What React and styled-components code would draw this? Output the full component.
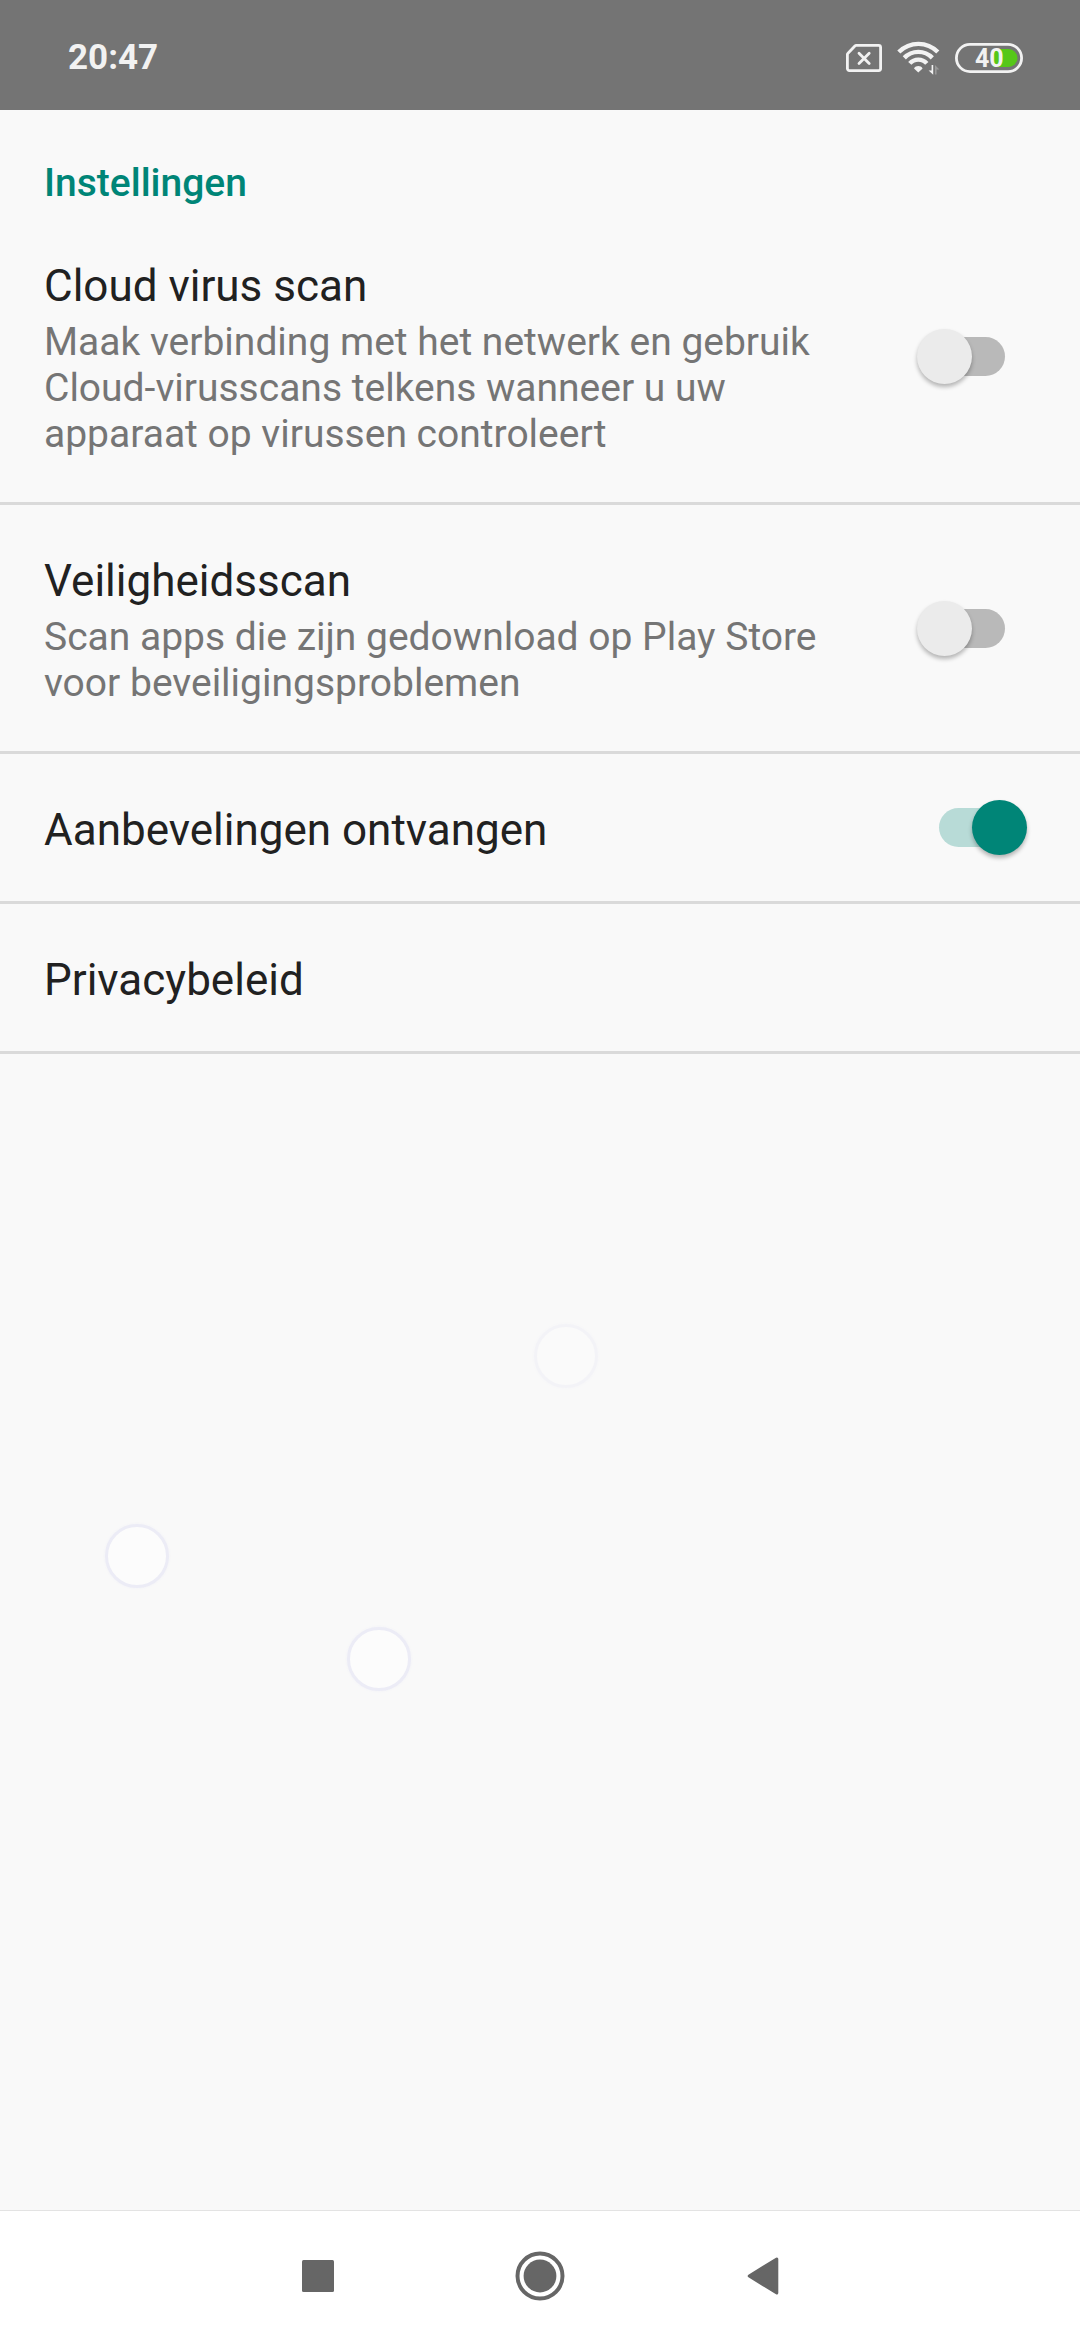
import React from 'react';
import styled, { createGlobalStyle } from 'styled-components';

const GlobalStyle = createGlobalStyle`
  * {
    box-sizing: border-box;
  }
  body {
    margin: 0;
    background-color: #f9f9f9;
    font-family: Roboto, sans-serif;
  }
`

const Container = styled.div`
  min-height: 100vh;
  display: flex;
  flex-direction: column;
`

const StatusBar = styled.header`
  height: 110px;
  padding: 6px 57px 0px 68px;
  display: flex;
  justify-content: space-between;
  align-items: center;
  background-color: #747474;
  color: #f2f2f2;
`

const Time = styled.time`
  font-size: 35px;
  line-height: 40px;
  font-weight: 700;
`

const StatusIcons = styled.div`
  display: flex;
  align-items: center;
  gap: 15px;
`

const Main = styled.main`
  flex: 1;
  display: flex;
  flex-direction: column;
`

const SectionTitle = styled.h1`
  margin: 0px;
  padding: 50px 44px 4px;
  font-size: 39px;
  line-height: 46px;
  font-weight: 500;
  color: #008577;
`

const List = styled.ul`
  margin: 0px;
  padding: 0px;
  list-style: none;
`

const ListItem = styled.li`
  border-bottom: 3px solid #dadada;
`

const Row = styled.label`
  display: flex;
  align-items: center;
  gap: 55px;
  padding: 0px 53px 0px 44px;
`

const LinkRow = styled.a`
  display: flex;
  padding: 0px 53px 0px 44px;
  text-decoration: none;
`

const Info = styled.span`
  flex: 1;
  display: flex;
  flex-direction: column;
  gap: 7px;
  padding: 50px 0px 45px;
`

const Title = styled.span`
  font-size: 44px;
  line-height: 52px;
  color: #212121;
`

const Desc = styled.span`
  font-size: 39px;
  line-height: 46px;
  color: #757575;
`

const Switch = styled.input`
  appearance: none;
  flex: none;
  width: 110px;
  height: 56px;
  margin: 0px;
  display: grid;
  align-items: center;
  cursor: pointer;

  &::before,
  &::after {
    content: '';
    grid-area: 1 / 1;
  }
  &::before {
    justify-self: center;
    width: 66px;
    height: 39px;
    border-radius: 20px;
    background-color: #b9b9b9;
  }
  &::after {
    justify-self: start;
    width: 55px;
    height: 55px;
    border-radius: 50%;
    background-color: #ebebeb;
    box-shadow: 0px 3px 4px rgba(0, 0, 0, 0.28);
  }
  &:checked::before {
    background-color: #b8dbd7;
  }
  &:checked::after {
    justify-self: end;
    background-color: #008577;
  }
`

const Canvas = styled.div`
  flex: 1;
  position: relative;
`

const Bubble = styled.span`
  position: absolute;
  left: ${props => props.$x}px;
  top: ${props => props.$y}px;
  width: 64px;
  height: 64px;
  border-radius: 50%;
  border: 3px solid #ececf6;
  background-color: #fcfcfc;
  box-shadow: 0px 0px 3px #f0f0f7;
  opacity: ${props => props.$opacity};
`

const NavBar = styled.nav`
  height: 130px;
  display: flex;
  justify-content: center;
  border-top: 1px solid #e3e3e3;
  background-color: #fff;
`

const NavButton = styled.button`
  width: 222px;
  padding: 0px;
  border: none;
  background: none;
  display: flex;
  justify-content: center;
  align-items: center;
  color: #666;
  cursor: pointer;
`

const SimIcon = () => (
  <svg width="36" height="28" viewBox="0 0 36 28" fill="none" stroke="currentColor" strokeWidth="2.8">
    <path d="M10.3 1.4H32.6a2 2 0 0 1 2 2V24.6a2 2 0 0 1-2 2H3.4a2 2 0 0 1-2-2V10.6a2 2 0 0 1 .6-1.4L8.9 2a2 2 0 0 1 1.4-.6Z" />
    <path d="M13 9.2 23.2 19.4M23.2 9.2 13 19.4" strokeLinecap="round" />
  </svg>
)

const WifiIcon = () => (
  <svg width="43" height="34" viewBox="0 -1 43 34" fill="none">
    <g stroke="currentColor" strokeWidth="4.4">
      <path d="M1.8 10C13-.9 30-.9 40.8 10" />
      <path d="M7.3 15.9C15 7.9 27.6 7.9 35.3 15.9" />
      <path d="M12.8 21.4C17.4 16.3 25.2 16.3 29.8 21.4" />
    </g>
    <path d="M17 26.4C18.8 23.2 23.8 23.2 25.6 26.4L21.3 30.6Z" fill="currentColor" />
    <path d="M36.2 23V32.8L31.6 28.4H34.6V23Z" fill="currentColor" />
    <path d="M38 32.6V23L42.4 27.6H39.6V32.6Z" fill="#999" />
  </svg>
)

const BatteryIcon = () => (
  <svg width="68" height="30" viewBox="0 0 68 30">
    <rect x="1.4" y="1.4" width="65.2" height="27.2" rx="13.6" fill="none" stroke="currentColor" strokeWidth="2.8" />
    <path d="M38 6H53.5a9 9 0 0 1 0 18H38Z" fill="#56c718" />
    <text x="20" y="24" fontSize="25" fontWeight="700" fill="currentColor">40</text>
  </svg>
)

const settings = [
  {
    title: 'Cloud virus scan',
    desc: 'Maak verbinding met het netwerk en gebruik Cloud-virusscans telkens wanneer u uw apparaat op virussen controleert',
    on: false,
  },
  {
    title: 'Veiligheidsscan',
    desc: 'Scan apps die zijn gedownload op Play Store voor beveiligingsproblemen',
    on: false,
  },
  { title: 'Aanbevelingen ontvangen', on: true },
]

const App = () => {
  return (
    <Container>
      <GlobalStyle />
      <StatusBar>
        <Time>20:47</Time>
        <StatusIcons>
          <SimIcon />
          <WifiIcon />
          <BatteryIcon />
        </StatusIcons>
      </StatusBar>
      <Main>
        <SectionTitle>Instellingen</SectionTitle>
        <List>
          {settings.map(item => (
            <ListItem key={item.title}>
              <Row>
                <Info>
                  <Title>{item.title}</Title>
                  {item.desc && <Desc>{item.desc}</Desc>}
                </Info>
                <Switch type="checkbox" role="switch" defaultChecked={item.on} />
              </Row>
            </ListItem>
          ))}
          <ListItem>
            <LinkRow href="#privacy">
              <Info>
                <Title>Privacybeleid</Title>
              </Info>
            </LinkRow>
          </ListItem>
        </List>
        <Canvas>
          <Bubble $x={534} $y={270} $opacity={0.4} />
          <Bubble $x={105} $y={470} $opacity={1} />
          <Bubble $x={347} $y={573} $opacity={1} />
        </Canvas>
      </Main>
      <NavBar>
        <NavButton aria-label="Recente apps">
          <svg width="32" height="32" viewBox="0 0 32 32">
            <rect width="32" height="32" rx="1.5" fill="currentColor" />
          </svg>
        </NavButton>
        <NavButton aria-label="Startscherm">
          <svg width="50" height="50" viewBox="0 0 50 50">
            <circle cx="25" cy="25" r="22.5" fill="none" stroke="currentColor" strokeWidth="4" />
            <circle cx="25" cy="25" r="16.4" fill="currentColor" />
          </svg>
        </NavButton>
        <NavButton aria-label="Terug">
          <svg width="34" height="38" viewBox="0 0 34 38">
            <path d="M4.2 19 31.8 2V36Z" fill="currentColor" stroke="currentColor" strokeWidth="3" strokeLinejoin="round" />
          </svg>
        </NavButton>
      </NavBar>
    </Container>
  )
}

export default App
